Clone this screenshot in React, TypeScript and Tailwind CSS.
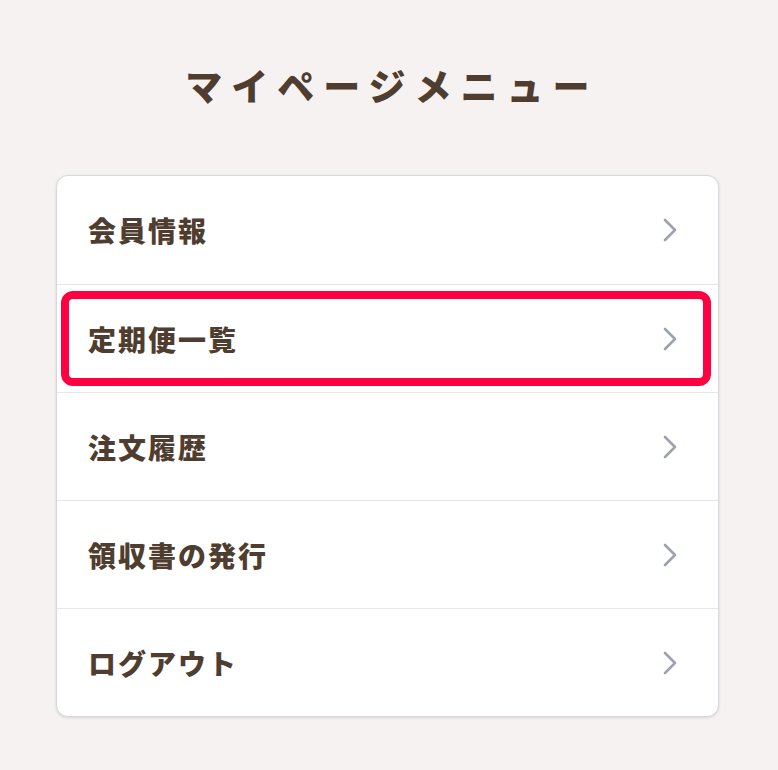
const ITEMS = ['会員情報', '定期便一覧', '注文履歴', '領収書の発行', 'ログアウト'];

function Chevron() {
  return (
    <svg width="14" height="24" viewBox="0 0 14 24" fill="none" className="text-[#9ca3af]">
      <polyline points="2,2 12,12 2,22" stroke="currentColor" strokeWidth="2.6" strokeLinecap="round" strokeLinejoin="round" />
    </svg>
  );
}

export default function App() {
  return (
    <div
      className="min-h-[770px] bg-[#f6f2f1] pl-14 pr-[59px] pt-[57px] text-[#4f3d30]"
      style={{ fontFamily: '"Noto Sans CJK JP", "Noto Sans", sans-serif' }}
    >
      <h1 className="text-center text-[37px] font-black leading-[56px] tracking-[9px] pl-[9px]">
        マイページメニュー
      </h1>

      <div className="mt-[62px] rounded-xl border border-[#d5d8de] bg-white shadow-[0_1px_3px_rgba(0,0,0,0.12)]">
        {ITEMS.map((label, i) => (
          <div
            key={label}
            className={`relative flex h-[108px] items-center justify-between pl-[31px] pr-[41px] ${
              i > 0 ? 'border-t border-[#e5e7eb]' : ''
            }`}
          >
            <span className="text-[28px] font-black tracking-[2px]">{label}</span>
            <Chevron />
            {i === 1 && (
              <div className="pointer-events-none absolute left-[4px] right-[7px] top-[6px] bottom-[6px] rounded-[12px] border-[8px] border-[#ff0040]" />
            )}
          </div>
        ))}
      </div>
    </div>
  );
}
